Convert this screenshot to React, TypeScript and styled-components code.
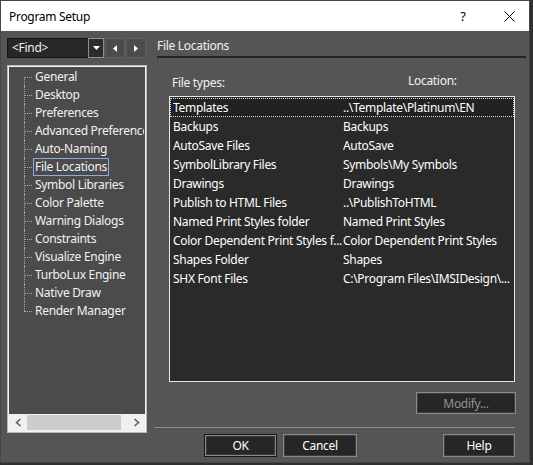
import React from "react";
import styled, { createGlobalStyle } from "styled-components";

const GlobalStyle = createGlobalStyle`
  html, body {
    margin: 0;
    padding: 0;
    background: #303030;
  }
  body {
    width: 533px;
    height: 465px;
    overflow: hidden;
    font-family: "Noto Sans", "Liberation Sans", sans-serif;
    font-size: 12px;
    letter-spacing: -0.3px;
  }
  * {
    box-sizing: border-box;
  }
`;

const treeItems = [
  "General",
  "Desktop",
  "Preferences",
  "Advanced Preferences",
  "Auto-Naming",
  "File Locations",
  "Symbol Libraries",
  "Color Palette",
  "Warning Dialogs",
  "Constraints",
  "Visualize Engine",
  "TurboLux Engine",
  "Native Draw",
  "Render Manager",
];

const fileRows: [string, string][] = [
  ["Templates", "..\\Template\\Platinum\\EN"],
  ["Backups", "Backups"],
  ["AutoSave Files", "AutoSave"],
  ["SymbolLibrary Files", "Symbols\\My Symbols"],
  ["Drawings", "Drawings"],
  ["Publish to HTML Files", "..\\PublishToHTML"],
  ["Named Print Styles folder", "Named Print Styles"],
  ["Color Dependent Print Styles f...", "Color Dependent Print Styles"],
  ["Shapes Folder", "Shapes"],
  ["SHX Font Files", "C:\\Program Files\\IMSIDesign\\..."],
];

const App: React.FC = () => {
  return (
    <>
      <GlobalStyle />
      <Window>
        <TitleBar>
          <Title>Program Setup</Title>
          <Caption $w={52}>?</Caption>
          <Caption $w={40}>
            <svg width="11" height="11" viewBox="0 0 11 11">
              <path d="M0.5 0.5 L10.5 10.5 M10.5 0.5 L0.5 10.5" stroke="#000" strokeWidth="1" />
            </svg>
          </Caption>
        </TitleBar>
        <Body>
          <LeftColumn>
            <FindRow>
              <FindBox>
                <FindText>&lt;Find&gt;</FindText>
                <DropButton>
                  <svg width="7" height="4" viewBox="0 0 7 4">
                    <polygon points="0,0 7,0 3.5,4" fill="#fff" />
                  </svg>
                </DropButton>
              </FindBox>
              <NavButton>
                <svg width="4" height="7" viewBox="0 0 4 7">
                  <polygon points="4,0 4,7 0,3.5" fill="#fff" />
                </svg>
              </NavButton>
              <NavButton>
                <svg width="4" height="7" viewBox="0 0 4 7">
                  <polygon points="0,0 0,7 4,3.5" fill="#fff" />
                </svg>
              </NavButton>
            </FindRow>
            <Tree>
              <TreeList>
                {treeItems.map((item, i) => (
                  <TreeRow key={item} $first={i === 0} $last={i === treeItems.length - 1}>
                    <TreeLabel $selected={item === "File Locations"}>{item}</TreeLabel>
                  </TreeRow>
                ))}
              </TreeList>
              <HScroll>
                <ScrollArrow>
                  <svg width="7" height="9" viewBox="0 0 7 9">
                    <polyline points="5.5,1 1.5,4.5 5.5,8" fill="none" stroke="#606060" strokeWidth="1.6" />
                  </svg>
                </ScrollArrow>
                <ScrollThumb />
                <ScrollArrow>
                  <svg width="7" height="9" viewBox="0 0 7 9">
                    <polyline points="1.5,1 5.5,4.5 1.5,8" fill="none" stroke="#606060" strokeWidth="1.6" />
                  </svg>
                </ScrollArrow>
              </HScroll>
            </Tree>
          </LeftColumn>
          <RightColumn>
            <PageHeader>File Locations</PageHeader>
            <Panel>
              <LabelRow>
                <ColumnLabel $w={236} $drop>
                  File types:
                </ColumnLabel>
                <ColumnLabel>Location:</ColumnLabel>
              </LabelRow>
              <FileList>
                {fileRows.map(([type, location], i) => (
                  <FileRow key={type} $selected={i === 0}>
                    <TypeCell>{type}</TypeCell>
                    <LocationCell>{location}</LocationCell>
                  </FileRow>
                ))}
              </FileList>
              <ModifyRow>
                <DialogButton $w={100} $h={22} $disabled>
                  Modify...
                </DialogButton>
              </ModifyRow>
            </Panel>
            <Separator />
            <ButtonRow>
              <DialogButton $w={73} $h={23} $default>
                OK
              </DialogButton>
              <DialogButton $w={74} $h={23}>
                Cancel
              </DialogButton>
              <Spacer />
              <DialogButton $w={72} $h={23}>
                Help
              </DialogButton>
            </ButtonRow>
          </RightColumn>
        </Body>
      </Window>
    </>
  );
};

const Window = styled.div`
  width: 530px;
  height: 463px;
  background: #555555;
  border: 1px solid #464646;
  display: flex;
  flex-direction: column;
`;

const TitleBar = styled.div`
  height: 30px;
  background: #ffffff;
  display: flex;
  align-items: center;
  flex-shrink: 0;
`;

const Title = styled.div`
  flex: 1;
  padding-left: 8px;
  color: #000;
  font-size: 12px;
`;

const Caption = styled.div<{ $w: number }>`
  width: ${(p) => p.$w}px;
  height: 100%;
  display: flex;
  align-items: center;
  justify-content: center;
  color: #000;
  font-size: 13px;
`;

const Body = styled.div`
  flex: 1;
  display: flex;
  gap: 10px;
  padding: 7px 0 0 6px;
`;

const LeftColumn = styled.div`
  width: 140px;
  display: flex;
  flex-direction: column;
  gap: 7px;
`;

const FindRow = styled.div`
  height: 20px;
  display: flex;
  gap: 1px;
`;

const FindBox = styled.div`
  width: 97px;
  display: flex;
  background: #282828;
  border: 1px solid #141414;
`;

const FindText = styled.div`
  flex: 1;
  color: #eaf2ff;
  padding-left: 4px;
  line-height: 18px;
`;

const DropButton = styled.div`
  width: 16px;
  margin: -1px -1px -1px 0;
  border: 1px solid #8e8e8e;
  background: #2c2c2c;
  display: flex;
  align-items: center;
  justify-content: center;
`;

const NavButton = styled.div`
  width: 20px;
  background: #4c4c4c;
  border: 1px solid #5e5e5e;
  display: flex;
  align-items: center;
  justify-content: center;
`;

const Tree = styled.div`
  height: 368px;
  background: #4b4b4b;
  border: 1px solid #b8b8b8;
  box-shadow: inset 0 0 0 1px #f4f4f4;
  padding: 2px;
  display: flex;
  flex-direction: column;
`;

const TreeList = styled.div`
  flex: 1;
  overflow: hidden;
`;

const TreeRow = styled.div<{ $first: boolean; $last: boolean }>`
  position: relative;
  height: 18px;
  padding-left: 23px;
  display: flex;
  align-items: center;
  white-space: nowrap;

  &::before {
    content: "";
    position: absolute;
    left: 14px;
    width: 8px;
    top: 9px;
    border-top: 1px dotted #a8a8a8;
  }

  &::after {
    content: "";
    position: absolute;
    left: 14px;
    top: ${(p) => (p.$first ? "9px" : "0")};
    height: ${(p) => (p.$first || p.$last ? "9px" : "18px")};
    border-left: 1px dotted #a8a8a8;
  }
`;

const TreeLabel = styled.span<{ $selected: boolean }>`
  color: #f2f2f2;
  padding: 0 1px;
  line-height: 16px;
  border: 1px solid ${(p) => (p.$selected ? "#8fabd8" : "transparent")};
`;

const HScroll = styled.div`
  height: 17px;
  margin: 0 -1px -1px;
  background: #f0f0f0;
  display: flex;
  align-items: center;
`;

const ScrollArrow = styled.div`
  width: 18px;
  height: 100%;
  display: flex;
  align-items: center;
  justify-content: center;
`;

const ScrollThumb = styled.div`
  width: 94px;
  height: 15px;
  background: #cdcdcd;
  margin-right: auto;
`;

const RightColumn = styled.div`
  width: 369px;
  display: flex;
  flex-direction: column;
`;

const PageHeader = styled.div`
  height: 20px;
  line-height: 16px;
  color: #f2f2f2;
  border-bottom: 2px solid #252525;
`;

const Panel = styled.div`
  height: 369px;
  padding: 14px 0 0 11px;
  border-left: 1px solid #505050;
  display: flex;
  flex-direction: column;
`;

const LabelRow = styled.div`
  height: 24px;
  display: flex;
  padding-left: 3px;
`;

const ColumnLabel = styled.div<{ $w?: number; $drop?: boolean }>`
  width: ${(p) => (p.$w ? `${p.$w}px` : "auto")};
  flex-shrink: 0;
  color: #f2f2f2;
  line-height: 18px;
  margin-top: ${(p) => (p.$drop ? "2px" : "0")};
`;

const FileList = styled.div`
  width: 346px;
  height: 286px;
  padding-top: 1px;
  background: #2a2a2a;
  border: 1px solid #e6e6e6;
`;

const FileRow = styled.div<{ $selected: boolean }>`
  height: 19px;
  display: flex;
  align-items: center;
  padding-left: 2px;
  color: #ffffff;
  white-space: nowrap;
  background: ${(p) => (p.$selected ? "#222222" : "transparent")};
  border: 1px dotted ${(p) => (p.$selected ? "#d8d8d8" : "transparent")};
`;

const TypeCell = styled.div`
  width: 170px;
  flex-shrink: 0;
  overflow: hidden;
`;

const LocationCell = styled.div`
  flex: 1;
  overflow: hidden;
`;

const ModifyRow = styled.div`
  display: flex;
  justify-content: flex-end;
  padding-right: 10px;
  margin-top: 10px;
`;

const DialogButton = styled.div<{ $w: number; $h: number; $default?: boolean; $disabled?: boolean }>`
  width: ${(p) => p.$w}px;
  height: ${(p) => p.$h}px;
  background: #262626;
  color: ${(p) => (p.$disabled ? "#929292" : "#ffffff")};
  display: flex;
  align-items: center;
  justify-content: center;
  border: 1px solid ${(p) => (p.$default ? "#161616" : "#8a8a8a")};
  box-shadow: ${(p) =>
    p.$default ? "inset 0 0 0 1px #8a8a8a, inset 0 0 0 2px #3a3a3a" : "inset 0 0 0 1px #3e3e3e"};
`;

const Separator = styled.div`
  height: 1px;
  margin: 0 11px 0 -3px;
  background: #8c8c8c;
`;

const ButtonRow = styled.div`
  display: flex;
  gap: 6px;
  margin-top: 6px;
  padding: 0 11px 0 47px;
`;

const Spacer = styled.div`
  flex: 1;
`;

export default App;
